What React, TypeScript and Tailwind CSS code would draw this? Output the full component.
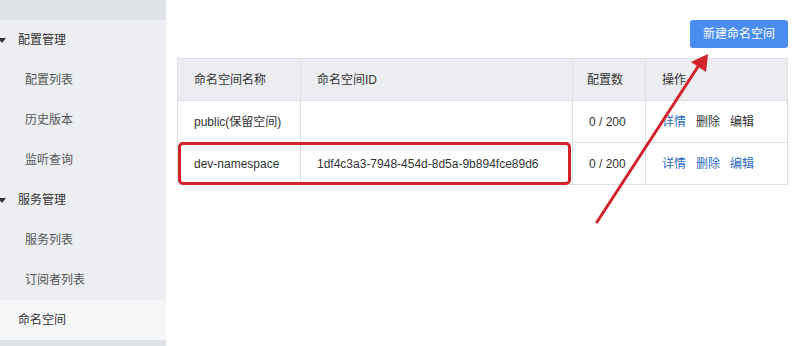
import React from 'react';

const font = { fontFamily: '"Liberation Sans", "Noto Sans CJK SC", sans-serif' };

const menu = [
  { label: '配置管理', group: true },
  { label: '配置列表' },
  { label: '历史版本' },
  { label: '监听查询' },
  { label: '服务管理', group: true },
  { label: '服务列表' },
  { label: '订阅者列表' },
  { label: '命名空间', active: true },
];

const rows = [
  { name: 'public(保留空间)', id: '', count: '0 / 200', muted: true },
  { name: 'dev-namespace', id: '1df4c3a3-7948-454d-8d5a-9b894fce89d6', count: '0 / 200', muted: false },
];

const App: React.FC = () => {
  return (
    <div className="relative flex w-[792px] h-[346px] bg-white overflow-hidden text-[12px] text-[#333]" style={font}>
      {/* Sidebar */}
      <div className="w-[166px] flex-shrink-0 flex flex-col bg-[#eceef2]">
        <div className="h-[20px] bg-[#dfe2e7]"></div>
        {menu.map((item) => (
          <div
            key={item.label}
            className={`h-[40px] flex items-center ${item.active ? 'bg-[#f5f6f8] pl-[18px]' : item.group ? 'pl-0' : 'pl-[25px]'}`}
          >
            {item.group && (
              <span className="w-0 h-0 mr-[12px] border-l-[4px] border-r-[4px] border-t-[5px] border-l-transparent border-r-transparent border-t-[#333] -ml-[2px]"></span>
            )}
            <span className={item.group || item.active ? 'text-[#333]' : 'text-[#555]'}>{item.label}</span>
          </div>
        ))}
        <div className="flex-1 bg-[#dfe2e7]"></div>
      </div>

      {/* Main */}
      <div className="flex-1 pl-[11px] pr-[4px] pt-[20px]">
        <div className="flex justify-end">
          <button className="h-[28px] w-[98px] rounded-[3px] bg-[#4a8cf0] text-white text-[12px]">新建命名空间</button>
        </div>
        <table className="mt-[10px] w-[611px] border-collapse border border-[#dcdfe4]">
          <thead>
            <tr className="h-[42px] bg-[#ebedf1]">
              <th className="w-[123px] border border-[#dcdfe4] font-normal text-left pl-[16px]">命名空间名称</th>
              <th className="w-[272px] border border-[#dcdfe4] font-normal text-left pl-[16px]">命名空间ID</th>
              <th className="w-[73px] border border-[#dcdfe4] font-normal text-left pl-[14px]">配置数</th>
              <th className="border border-[#dcdfe4] font-normal text-left pl-[16px]">操作</th>
            </tr>
          </thead>
          <tbody>
            {rows.map((r) => (
              <tr key={r.name} className="h-[42px]">
                <td className="border border-[#dcdfe4] pl-[16px]">{r.name}</td>
                <td className="border border-[#dcdfe4] pl-[16px]">{r.id}</td>
                <td className="border border-[#dcdfe4] pl-[16px]">{r.count}</td>
                <td className="border border-[#dcdfe4] pl-[16px]">
                  <span className="text-[#2d6bc2] mr-[10px]">详情</span>
                  <span className={`${r.muted ? 'text-[#333]' : 'text-[#2d6bc2]'} mr-[10px]`}>删除</span>
                  <span className={r.muted ? 'text-[#333]' : 'text-[#2d6bc2]'}>编辑</span>
                </td>
              </tr>
            ))}
          </tbody>
        </table>
      </div>

      {/* Annotation: highlight box */}
      <div className="absolute left-[178px] top-[142px] w-[393px] h-[43px] rounded-[5px] border-[3px] border-[#d3222a]"></div>

      {/* Annotation: arrow */}
      <svg className="absolute left-0 top-0 pointer-events-none" width="792" height="346" viewBox="0 0 792 346">
        <line x1="597" y1="222" x2="701" y2="62" stroke="#d3222a" strokeWidth="3" strokeLinecap="round" />
        <polygon points="708,54 706,72 691,62" fill="#d3222a" />
      </svg>
    </div>
  );
};

export default App;
